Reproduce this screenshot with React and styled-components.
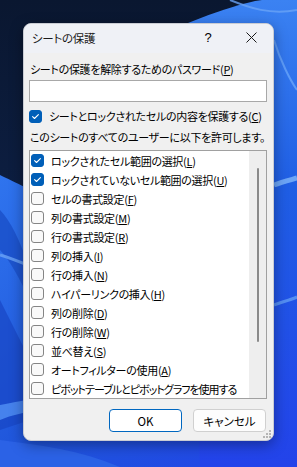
import React from "react";
import styled, { createGlobalStyle, css } from "styled-components";

const Global = createGlobalStyle`
  html, body { margin: 0; padding: 0; }
  body {
    width: 297px;
    height: 467px;
    overflow: hidden;
    font-family: "Noto Sans CJK JP", "Noto Sans", sans-serif;
  }
`;

const Desktop = styled.div`
  position: relative;
  width: 297px;
  height: 467px;
  box-sizing: border-box;
  padding: 23px 23px 0 23px;
  background: #0b1a34;
  overflow: hidden;
`;

const WallpaperSvg = styled.svg`
  position: absolute;
  inset: 0;
  width: 297px;
  height: 467px;
`;

const Dialog = styled.div`
  position: relative;
  width: 251px;
  height: 418px;
  box-sizing: border-box;
  border: 1px solid #c9ccd3;
  border-radius: 8px;
  background: #f0f0f0;
  overflow: hidden;
  display: flex;
  flex-direction: column;
  box-shadow: 0 4px 14px rgba(0, 0, 0, 0.35);
  font-feature-settings: "palt";
  color: #000;
  font-size: 11px;
  letter-spacing: -0.3px;
`;

const TitleBar = styled.div`
  height: 29px;
  flex: none;
  display: flex;
  align-items: center;
  background: #eff1f6;
  padding-left: 8px;
  padding-bottom: 2px;
  box-sizing: border-box;
`;

const TitleText = styled.div`
  flex: 1;
  font-size: 11.5px;
  line-height: 16px;
  color: #1a1a1a;
`;

const HelpButton = styled.div`
  width: 16px;
  text-align: center;
  font-size: 13px;
  line-height: 16px;
  margin-right: 29px;
  font-family: "Liberation Sans", sans-serif;
`;

const CloseButton = styled.div`
  width: 12px;
  height: 12px;
  margin-right: 16px;
  display: flex;
  align-items: center;
  justify-content: center;
`;

const Body = styled.div`
  flex: 1;
  display: flex;
  flex-direction: column;
  padding: 8px 6px 0 5px;
`;

const Label = styled.div`
  line-height: 16px;
  padding-left: 1px;
  white-space: nowrap;
  margin-top: ${(p) => p.$mt || 0}px;
`;

const Key = styled.span`
  text-decoration: underline;
  text-underline-offset: 1px;
`;

const PasswordInput = styled.div`
  margin-top: 3px;
  height: 22px;
  box-sizing: border-box;
  border: 1px solid #a8a8a8;
  background: #fff;
`;

const CheckRow = styled.div`
  display: flex;
  align-items: center;
  gap: 7px;
  height: ${(p) => p.$h || 16}px;
  margin-top: ${(p) => p.$mt || 0}px;
  padding-left: ${(p) => p.$pl || 0}px;
  white-space: nowrap;
  line-height: 16px;
  letter-spacing: ${(p) => (p.$tight ? "-1px" : "inherit")};
`;

const BoxEl = styled.div`
  width: 13px;
  height: 13px;
  flex: none;
  box-sizing: border-box;
  border-radius: 3px;
  display: flex;
  align-items: center;
  justify-content: center;
  ${(p) =>
    p.$checked
      ? css`
          background: #005fb8;
          border: 1px solid #005fb8;
        `
      : css`
          background: #f9f9f9;
          border: 1px solid #858585;
        `}
`;

const CheckBox = ({ checked }) => (
  <BoxEl $checked={checked}>
    {checked && (
      <svg width="9" height="9" viewBox="0 0 9 9">
        <path d="M1.6 4.7 L3.5 6.5 L7.4 2.6" fill="none" stroke="#fff" strokeWidth="1.1" strokeLinecap="round" strokeLinejoin="round" />
      </svg>
    )}
  </BoxEl>
);

const ListBox = styled.div`
  margin-top: 5px;
  height: 249px;
  box-sizing: border-box;
  border: 1px solid #a0a0a0;
  background: #fff;
  display: flex;
`;

const List = styled.div`
  flex: 1;
  display: flex;
  flex-direction: column;
  overflow: hidden;
`;

const ScrollTrack = styled.div`
  width: 17px;
  flex: none;
  background: #eeeeee;
  display: flex;
  justify-content: center;
  padding-top: 17px;
  box-sizing: border-box;
`;

const Thumb = styled.div`
  width: 2px;
  height: 174px;
  border-radius: 1px;
  background: #8a8a8a;
`;

const ButtonRow = styled.div`
  margin-top: 10px;
  display: flex;
  justify-content: flex-end;
  gap: 11px;
  padding-right: 1px;
`;

const Button = styled.div`
  width: 73px;
  height: 23px;
  box-sizing: border-box;
  border-radius: 4px;
  display: flex;
  align-items: center;
  justify-content: center;
  font-size: 11.5px;
  letter-spacing: 0;
  background: #fdfdfd;
  ${(p) =>
    p.$primary
      ? css`
          border: 1px solid #0067c0;
          background: #fff;
        `
      : css`
          border: 1px solid #d0d0d0;
        `}
`;

const Grip = styled.svg`
  position: absolute;
  right: 1px;
  bottom: 1px;
`;

const items = [
  { t: "ロックされたセル範囲の選択", k: "L", c: true },
  { t: "ロックされていないセル範囲の選択", k: "U", c: true },
  { t: "セルの書式設定", k: "F" },
  { t: "列の書式設定", k: "M" },
  { t: "行の書式設定", k: "R" },
  { t: "列の挿入", k: "I" },
  { t: "行の挿入", k: "N" },
  { t: "ハイパーリンクの挿入", k: "H" },
  { t: "列の削除", k: "D" },
  { t: "行の削除", k: "W" },
  { t: "並べ替え", k: "S" },
  { t: "オートフィルターの使用", k: "A" },
  { t: "ピボットテーブルとピボットグラフを使用する", tight: true },
];

const Wallpaper = () => (
  <WallpaperSvg viewBox="0 0 297 467">
    <defs>
      <linearGradient id="dark" x1="0" y1="0" x2="0" y2="1">
        <stop offset="0" stopColor="#0a1730" />
        <stop offset="1" stopColor="#10285a" />
      </linearGradient>
      <linearGradient id="blue" x1="0" y1="0" x2="1" y2="1">
        <stop offset="0" stopColor="#2f74ee" />
        <stop offset="0.5" stopColor="#1f55db" />
        <stop offset="1" stopColor="#2244ea" />
      </linearGradient>
      <linearGradient id="right" x1="0" y1="0" x2="0" y2="1">
        <stop offset="0" stopColor="#3b82f2" />
        <stop offset="0.4" stopColor="#1f5ee4" />
        <stop offset="1" stopColor="#2343ea" />
      </linearGradient>
    </defs>
    <rect width="297" height="467" fill="url(#dark)" />
    <path d="M0 175 C 20 185, 60 200, 120 260 L 297 467 L 0 467 Z" fill="url(#blue)" />
    <path d="M188 23 C 215 12, 245 2, 262 0 L 297 0 L 297 467 L 200 467 Z" fill="url(#right)" />
    <path d="M0 210 C 10 220, 20 240, 30 270 L 30 300 C 20 280, 10 260, 0 250 Z" fill="#1a4fc8" opacity="0.8" />
    <path d="M0 255 C 10 258, 20 262, 30 266" stroke="#6aa3f5" strokeWidth="3" fill="none" opacity="0.8" />
    <path d="M0 300 C 10 320, 20 340, 30 360 L 30 420 L 0 430 Z" fill="#1846c4" opacity="0.7" />
    <path d="M0 405 C 15 402, 25 400, 40 398 L 40 410 C 25 412, 12 415, 0 420 Z" fill="#4d8cf2" opacity="0.85" />
    <path d="M0 440 C 40 445, 80 450, 120 467 L 0 467 Z" fill="#2b62e6" />
    <path d="M274 40 C 280 60, 290 80, 297 90" stroke="#5d9bf7" strokeWidth="2" fill="none" />
    <path d="M274 185 C 282 182, 290 180, 297 178" stroke="#7fb6fa" strokeWidth="5" fill="none" opacity="0.8" />
    <path d="M274 305 C 282 302, 290 300, 297 297" stroke="#6aa6f6" strokeWidth="3" fill="none" opacity="0.7" />
    <path d="M230 0 C 250 8, 270 15, 297 10" stroke="#69a2f6" strokeWidth="2" fill="none" opacity="0.8" />
  </WallpaperSvg>
);

export default function App() {
  return (
    <>
      <Global />
      <Desktop>
        <Wallpaper />
        <Dialog>
          <TitleBar>
            <TitleText>シートの保護</TitleText>
            <HelpButton>?</HelpButton>
            <CloseButton>
              <svg width="11" height="11" viewBox="0 0 11 11">
                <path d="M0.5 0.5 L10.5 10.5 M10.5 0.5 L0.5 10.5" stroke="#1a1a1a" strokeWidth="1" fill="none" />
              </svg>
            </CloseButton>
          </TitleBar>
          <Body>
            <Label>
              シートの保護を解除するためのパスワード(<Key>P</Key>)
            </Label>
            <PasswordInput />
            <CheckRow $mt={6}>
              <CheckBox checked />
              <span>
                シートとロックされたセルの内容を保護する(<Key>C</Key>)
              </span>
            </CheckRow>
            <Label $mt={5}>このシートのすべてのユーザーに以下を許可します。</Label>
            <ListBox>
              <List>
                {items.map((it) => (
                  <CheckRow key={it.t} $h={19} $pl={1} $tight={it.tight}>
                    <CheckBox checked={it.c} />
                    <span>
                      {it.t}
                      {it.k && (
                        <>
                          (<Key>{it.k}</Key>)
                        </>
                      )}
                    </span>
                  </CheckRow>
                ))}
              </List>
              <ScrollTrack>
                <Thumb />
              </ScrollTrack>
            </ListBox>
            <ButtonRow>
              <Button $primary>OK</Button>
              <Button>キャンセル</Button>
            </ButtonRow>
          </Body>
          <Grip width="11" height="11" viewBox="0 0 11 11">
            {[
              [8, 2],
              [5, 5],
              [8, 5],
              [2, 8],
              [5, 8],
              [8, 8],
            ].map(([x, y]) => (
              <rect key={x + "-" + y} x={x} y={y} width="2" height="2" fill="#b5b5b5" />
            ))}
          </Grip>
        </Dialog>
      </Desktop>
    </>
  );
}
